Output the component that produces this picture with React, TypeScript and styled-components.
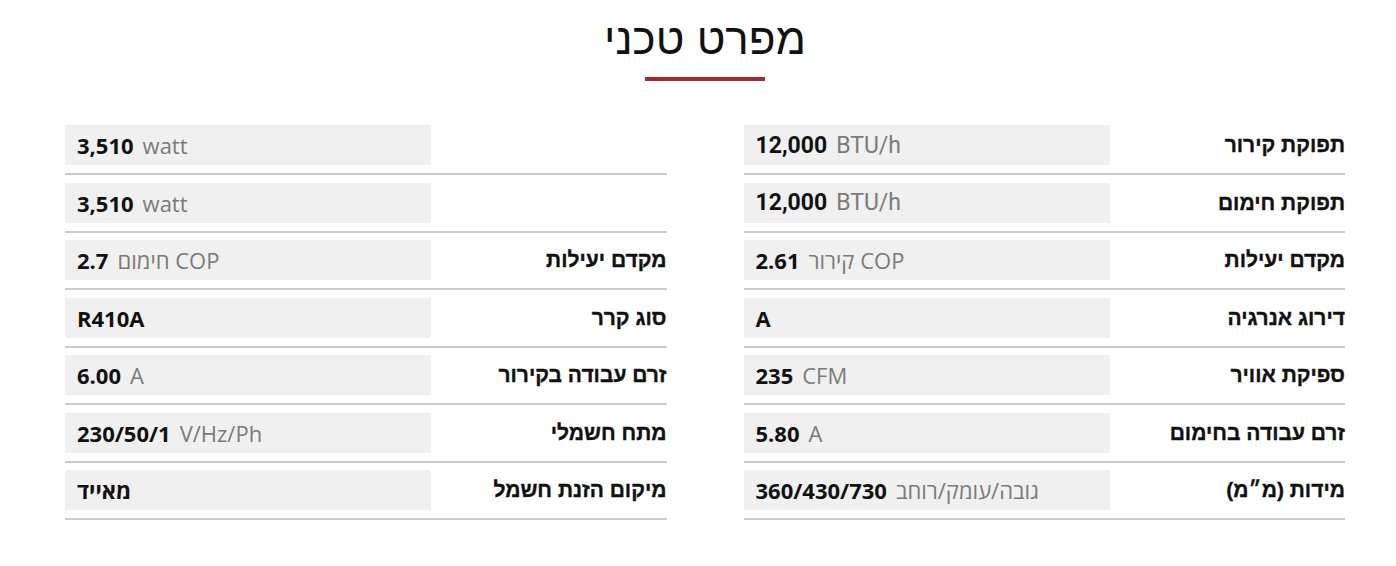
import React from "react";
import styled, { createGlobalStyle } from "styled-components";

const Global = createGlobalStyle`
  html, body { margin: 0; padding: 0; background: #ffffff; }
  body { font-family: "Liberation Sans", Arial, sans-serif; }
`;

const Page = styled.div`
  direction: rtl;
  width: 1280px;
  margin-left: 65px;
  padding-top: 14px;
`;

const Title = styled.h2`
  margin: 0;
  text-align: center;
  font-family: "Liberation Sans", Arial, sans-serif;
  font-weight: 400;
  font-size: 44px;
  line-height: 50px;
  color: #111;
`;

const Underline = styled.div`
  width: 120px;
  height: 4px;
  margin: 13px auto 0;
  background: #a8282f;
`;

const Columns = styled.div`
  display: grid;
  grid-template-columns: 1fr 1fr;
  column-gap: 77px;
  margin-top: 44px;
`;

const Column = styled.div`
  display: flex;
  flex-direction: column;
  gap: 7.5px;
`;

const Row = styled.div`
  display: flex;
  align-items: center;
  justify-content: space-between;
  padding-bottom: 8px;
  border-bottom: 2px solid #cccccc;
`;

const Label = styled.div`
  font-family: "Liberation Sans", Arial, sans-serif;
  font-weight: 700;
  font-size: 21px;
  -webkit-text-stroke: 0.35px #111;
  color: #111;
  white-space: nowrap;
`;

const ValueBox = styled.div<{ $roboto?: boolean }>`
  direction: ltr;
  width: 366px;
  height: 40px;
  box-sizing: border-box;
  padding: 0 12px;
  display: flex;
  align-items: center;
  background: #f0f0f0;
  font-family: ${(p) => (p.$roboto ? "Roboto, sans-serif" : "\"Open Sans\", sans-serif")};
  font-size: ${(p) => (p.$roboto ? "23px" : "22px")};
  white-space: nowrap;
`;

const Num = styled.span`
  font-weight: 700;
  color: #111;
`;

const Unit = styled.span`
  font-weight: 400;
  color: #7a7a7a;
  margin-left: 9px;
  unicode-bidi: isolate;
`;

type Spec = { label: string; value: string; unit?: string; roboto?: boolean };

const right: Spec[] = [
  { label: "תפוקת קירור", value: "12,000", unit: "BTU/h", roboto: true },
  { label: "תפוקת חימום", value: "12,000", unit: "BTU/h", roboto: true },
  { label: "מקדם יעילות", value: "2.61", unit: "קירור COP" },
  { label: "דירוג אנרגיה", value: "A" },
  { label: "ספיקת אוויר", value: "235", unit: "CFM" },
  { label: "זרם עבודה בחימום", value: "5.80", unit: "A" },
  { label: "מידות (מ״מ)", value: "360/430/730", unit: "גובה/עומק/רוחב" },
];

const left: Spec[] = [
  { label: "", value: "3,510", unit: "watt" },
  { label: "", value: "3,510", unit: "watt" },
  { label: "מקדם יעילות", value: "2.7", unit: "חימום COP" },
  { label: "סוג קרר", value: "R410A" },
  { label: "זרם עבודה בקירור", value: "6.00", unit: "A" },
  { label: "מתח חשמלי", value: "230/50/1", unit: "V/Hz/Ph" },
  { label: "מיקום הזנת חשמל", value: "מאייד" },
];

const SpecColumn = ({ items }: { items: Spec[] }) => (
  <Column>
    {items.map((s, i) => (
      <Row key={i}>
        <Label>{s.label}</Label>
        <ValueBox $roboto={s.roboto}>
          <Num>{s.value}</Num>
          {s.unit && <Unit>{s.unit}</Unit>}
        </ValueBox>
      </Row>
    ))}
  </Column>
);

export default function App() {
  return (
    <>
      <Global />
      <Page>
        <Title>מפרט טכני</Title>
        <Underline />
        <Columns>
          <SpecColumn items={right} />
          <SpecColumn items={left} />
        </Columns>
      </Page>
    </>
  );
}
